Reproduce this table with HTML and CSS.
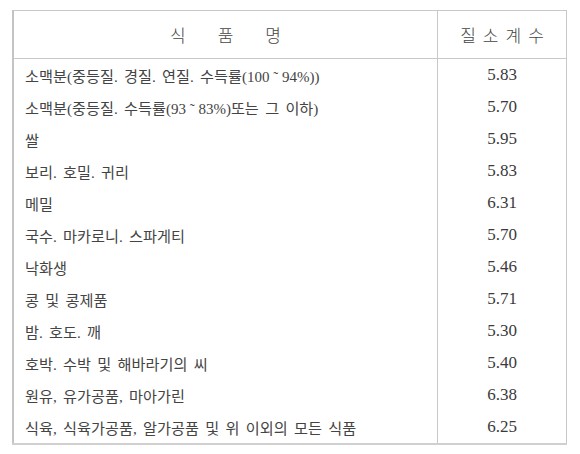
FILE: index.html
```html
<!DOCTYPE html>
<html lang="ko">
<head>
<meta charset="utf-8">
<link rel="stylesheet" href="styles.css">
</head>
<body>
<table class="tbl">
  <thead>
    <tr>
      <th class="name-h"><span>식</span><span>품</span><span>명</span></th>
      <th class="val-h"><span>질</span><span>소</span><span>계</span><span>수</span></th>
    </tr>
  </thead>
  <tbody>
    <tr><td class="name">소맥분(중등질. 경질. 연질. 수득률<span class="num">(100 ˜ 94%))</span></td><td class="val">5.83</td></tr>
    <tr><td class="name">소맥분(중등질. 수득률<span class="num">(93 ˜ 83%)</span>또는 그 이하)</td><td class="val">5.70</td></tr>
    <tr><td class="name">쌀</td><td class="val">5.95</td></tr>
    <tr><td class="name">보리. 호밀. 귀리</td><td class="val">5.83</td></tr>
    <tr><td class="name">메밀</td><td class="val">6.31</td></tr>
    <tr><td class="name">국수. 마카로니. 스파게티</td><td class="val">5.70</td></tr>
    <tr><td class="name">낙화생</td><td class="val">5.46</td></tr>
    <tr><td class="name">콩 및 콩제품</td><td class="val">5.71</td></tr>
    <tr><td class="name">밤. 호도. 깨</td><td class="val">5.30</td></tr>
    <tr><td class="name">호박. 수박 및 해바라기의 씨</td><td class="val">5.40</td></tr>
    <tr><td class="name">원유, 유가공품, 마아가린</td><td class="val">6.38</td></tr>
    <tr><td class="name">식육, 식육가공품, 알가공품 및 위 이외의 모든 식품</td><td class="val">6.25</td></tr>
  </tbody>
</table>
</body>
</html>
```
FILE: styles.css
```css
html, body {
  margin: 0;
  padding: 0;
  background: #ffffff;
}
body {
  padding: 10px 0 0 12px;
  font-family: "Liberation Serif", "Noto Sans CJK KR", serif;
  color: #3a3a3a;
}
.tbl {
  border-collapse: collapse;
  width: 555px;
  table-layout: fixed;
  border-left: 2px solid #c4c4c4;
  border-top: 1px solid #c8c8c8;
  border-right: 1px solid #c8c8c8;
  border-bottom: 2px solid #d0d0d0;
}
.tbl th {
  height: 47px;
  padding: 0;
  font-family: "Noto Sans CJK KR", sans-serif;
  font-weight: 300;
  font-size: 17px;
  color: #444;
  border-bottom: 1px solid #c8c8c8;
}
.name-h {
  width: 423px;
  border-right: 1px solid #c8c8c8;
}
.name-h span {
  display: inline-block;
  margin: 0 16px;
}
.val-h span {
  display: inline-block;
  margin: 0 3.5px;
}
.tbl td {
  height: 32px;
  padding: 0;
}
.name {
  padding-left: 11px !important;
  font-size: 15.2px;
  word-spacing: 2.5px;
  color: #444;
  border-right: 1px solid #c8c8c8;
  white-space: nowrap;
}
.num {
  font-size: 15px;
  word-spacing: 0;
}
.val {
  text-align: center;
  font-size: 17px;
}
```
